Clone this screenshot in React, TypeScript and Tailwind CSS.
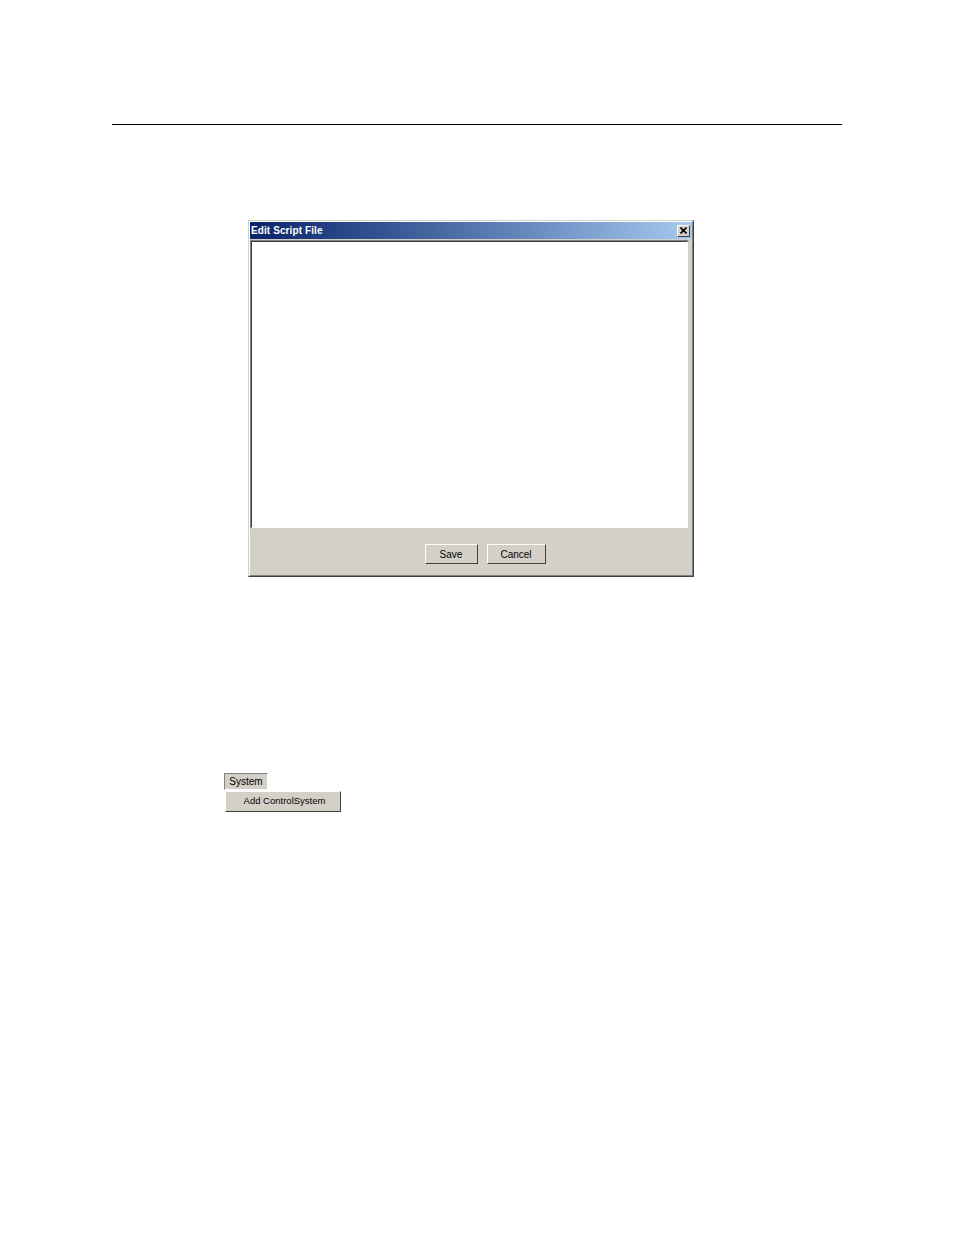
export default function App() {
  return (
    <div className="min-h-[1235px] w-[954px] bg-white pt-[124px] font-['Liberation_Sans',Arial,sans-serif]">
      {/* page rule */}
      <div className="ml-[112px] h-px w-[730px] bg-black" />

      {/* dialog */}
      <div className="ml-[248px] mt-[95px] flex h-[357px] w-[446px] flex-col border border-b-[#404040] border-l-[#d4d0c8] border-r-[#404040] border-t-[#d4d0c8] bg-[#d4d0c8]">
        <div className="flex flex-1 flex-col border border-b-[#808080] border-l-white border-r-[#808080] border-t-white">
          <div className="flex h-[17px] items-center bg-gradient-to-r from-[#0a246a] to-[#a6caf0] pl-[1px] pr-[2px]">
            <span className="text-[10px] font-bold leading-none tracking-[0.1px] text-white">Edit Script File</span>
            <button className="ml-auto flex h-[12px] w-[13px] items-center justify-center border border-b-[#404040] border-l-white border-r-[#404040] border-t-white bg-[#d4d0c8]">
              <svg width="7" height="7" viewBox="0 0 7 7">
                <path d="M0.5 0.5 L6.5 6.5 M6.5 0.5 L0.5 6.5" stroke="#000" strokeWidth="1.6" />
              </svg>
            </button>
          </div>
          <div className="mr-[3px] mt-[1px] h-[289px] border border-b-[#d4d0c8] border-l-[#808080] border-r-[#d4d0c8] border-t-[#808080] bg-white">
            <div className="h-full border border-b-white border-l-[#404040] border-r-white border-t-[#404040]" />
          </div>
          <div className="flex flex-1 items-start justify-center gap-[9px] pl-[28px] pt-[15px]">
            <WinButton label="Save" width="w-[53px]" />
            <WinButton label="Cancel" width="w-[59px]" />
          </div>
        </div>
      </div>

      {/* menu */}
      <div className="ml-[224px] mt-[196px]">
        <div className="flex h-[17px] w-[44px] items-center justify-center border border-b-white border-l-[#808080] border-r-white border-t-[#808080] bg-[#d4d0c8] text-[10px] text-black">
          System
        </div>
        <div className="ml-[1px] mt-[1px] flex h-[21px] w-[116px] items-center justify-center border border-b-[#404040] border-l-white border-r-[#404040] border-t-white bg-[#d4d0c8] pl-[3px] text-[9.5px] text-black">
          Add ControlSystem
        </div>
      </div>
    </div>
  );
}

function WinButton({ label, width }: { label: string; width: string }) {
  return (
    <button className={`${width} h-[20px] border border-b-[#404040] border-l-white border-r-[#404040] border-t-white bg-[#d4d0c8] text-[10px] text-black`}>
      {label}
    </button>
  );
}
